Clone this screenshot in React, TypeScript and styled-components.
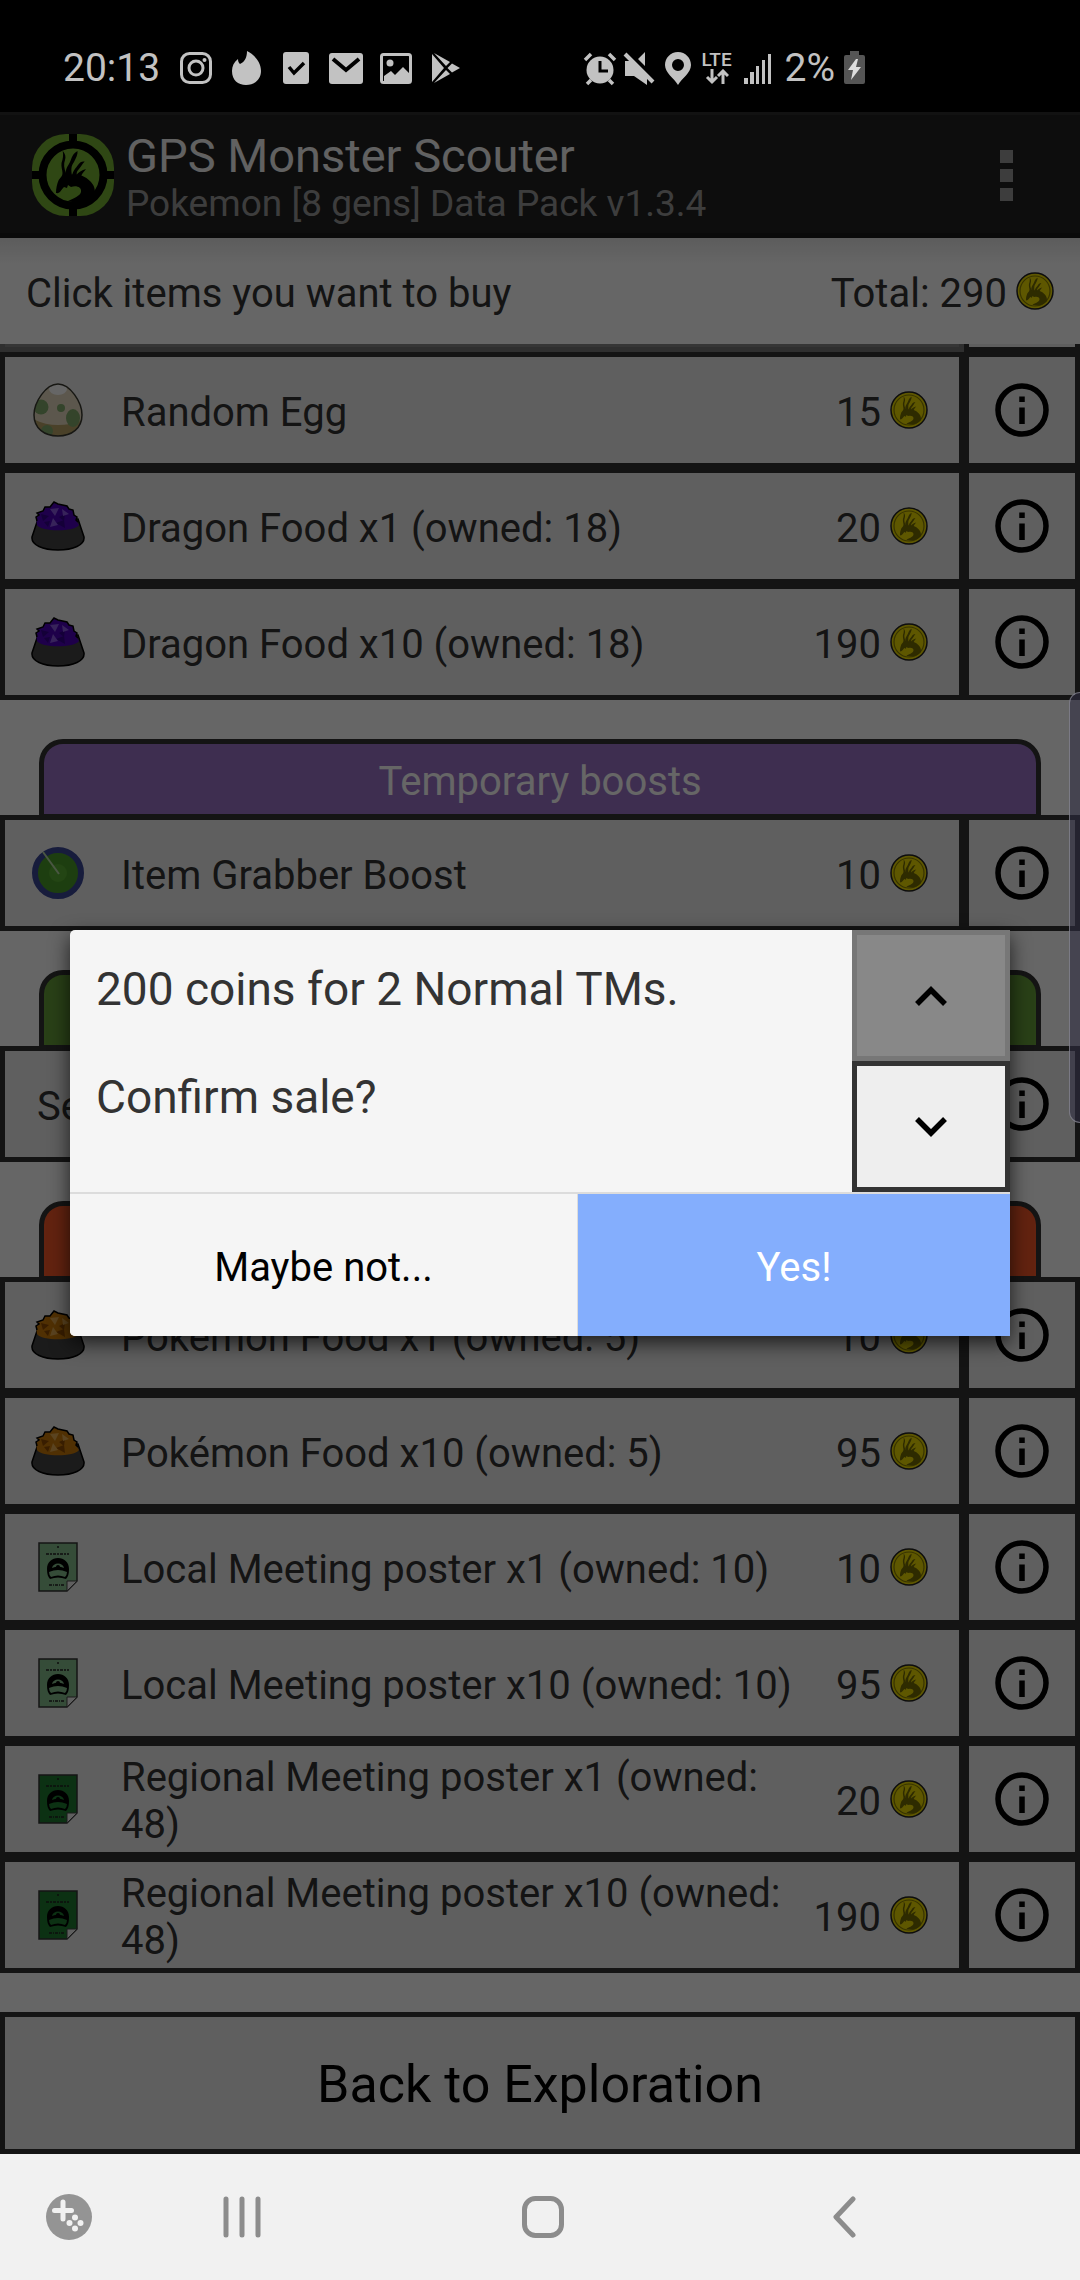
import React from 'react';
import styled, { createGlobalStyle } from 'styled-components';

const ink = '#333';
const cell = '#eee';

const GlobalStyle = createGlobalStyle`
  * { box-sizing: border-box; }
  body { margin: 0; background: #fff; font-family: Roboto, "Noto Sans", sans-serif; }
  button { font: inherit; color: inherit; margin: 0; padding: 0; border: 0; background: none; text-align: left; cursor: pointer; }
  svg { display: block; flex: none; }
`;

const Screen = styled.div`
  min-height: 100vh;
  display: flex;
  flex-direction: column;
`;

/* ---------- system bars ---------- */

const StatusBar = styled.div`
  height: 112px;
  padding: 0 215px 15px 63px;
  display: flex;
  align-items: flex-end;
  justify-content: space-between;
  background: #000;
  color: #c2c2c2;
  font-size: 39px;
  line-height: 58px;
`;

const StatusGroup = styled.div<{ $gap: number }>`
  display: flex;
  align-items: center;
  gap: ${p => p.$gap}px;
`;

const StatusText = styled.span`
  margin: 0 6px 0 8px;
`;

const Clock = styled.span`
  padding-right: 4px;
`;

const Network = styled.span`
  width: 36px;
  display: grid;
  justify-items: center;
  font-size: 19px;
  line-height: 18px;
  font-weight: 500;
`;

const NavBar = styled.nav`
  height: 126px;
  display: grid;
  grid-template-columns: 92px repeat(3, 1fr) 86px;
  align-items: center;
  justify-items: center;
  background: #f1f1f1;
  color: #8c8c8c;
`;

const NavButton = styled.button<{ $end?: boolean }>`
  justify-self: ${p => (p.$end ? 'end' : 'center')};
`;

/* ---------- app ---------- */

const AppArea = styled.div`
  position: relative;
  flex: 1;
  display: flex;
  flex-direction: column;
  color: ${ink};
  font-size: 40px;
  line-height: 47px;
`;

const Header = styled.header`
  height: 126px;
  padding: 2px 67px 0 32px;
  display: flex;
  align-items: center;
  gap: 12px;
  background: #222;
  border-top: 3px solid #2e2e2e;
  border-bottom: 5px solid #1a1a1a;
`;

const Titles = styled.div`
  flex: 1;
  padding-top: 6px;
`;

const Title = styled.h1`
  margin: 0;
  font-size: 47px;
  line-height: 52px;
  font-weight: 400;
  color: #f2f2f2;
`;

const Subtitle = styled.p`
  margin: 0;
  font-size: 37px;
  line-height: 44px;
  color: #9a9a9a;
`;

const MenuButton = styled.button`
  display: grid;
  gap: 6px;
`;

const MenuDot = styled.span`
  width: 13px;
  height: 13px;
  background: #999;
`;

const TotalBar = styled.div`
  height: 106px;
  padding: 0 26px;
  display: flex;
  align-items: center;
  justify-content: space-between;
  background: linear-gradient(#e6e6e6, #fff 26px);
`;

const Label = styled.span`
  padding-top: 4px;
`;

const Price = styled.span`
  display: flex;
  align-items: center;
  gap: 9px;
  white-space: nowrap;
`;

const Row = styled.div`
  display: grid;
  grid-template-columns: 1fr 116px;
`;

const ItemButton = styled.button<{ $plain?: boolean }>`
  min-height: 116px;
  padding: 0 31px 0 ${p => (p.$plain ? 32 : 26)}px;
  display: flex;
  align-items: center;
  border: 5px solid ${ink};
  background: ${cell};
`;

const ItemIcon = styled.span`
  width: 54px;
  margin-right: 36px;
  display: grid;
  place-items: center;
  flex: none;
`;

const ItemName = styled(Label)`
  flex: 1;
  padding-right: 16px;
`;

const InfoButton = styled.button`
  display: grid;
  place-items: center;
  border: 5px solid ${ink};
  background: ${cell};
  color: #000;
`;

const ScrolledItem = styled.div`
  height: 8px;
  background: #888;
  border: 5px solid #777;
  border-top: 0;
`;

const ScrolledInfo = styled.div`
  height: 8px;
  background: ${cell};
  border: 5px solid ${ink};
  border-top: 0;
`;

const Section = styled.section`
  padding-top: 39px;
`;

const Tab = styled.h2<{ $color: string }>`
  height: 76px;
  margin: 0 39px;
  padding-top: 14px;
  border: 5px solid ${ink};
  border-bottom-width: 1px;
  border-radius: 24px 24px 0 0;
  background: ${p => p.$color};
  color: #fff;
  font-size: 40px;
  line-height: 47px;
  font-weight: 400;
  text-align: center;
`;

const BackButton = styled.button`
  height: 142px;
  margin-top: 39px;
  padding-top: 4px;
  border: 5px solid ${ink};
  background: ${cell};
  color: #000;
  font-size: 52px;
  line-height: 62px;
  text-align: center;
`;

/* ---------- dialog ---------- */

const Scrim = styled.div`
  position: absolute;
  inset: 0;
  padding: 0 70px;
  display: flex;
  align-items: center;
  background: rgba(0, 0, 0, 0.6);
`;

const Dialog = styled.div`
  flex: 1;
  border-radius: 5px 0 0 5px;
  overflow: hidden;
  background: #f5f5f5;
`;

const DialogShadow = styled.div`
  flex: 1;
  display: flex;
  border-radius: 5px 0 0 5px;
  box-shadow: 0 7px 20px rgba(0, 0, 0, 0.7);
`;

const DialogBody = styled.div`
  display: grid;
  grid-template-columns: 1fr 158px;
  border-bottom: 2px solid #dcdcdc;
`;

const Message = styled.div`
  padding: 32px 26px;
  font-size: 46px;
  line-height: 54px;
`;

const Paragraph = styled.p`
  margin: 0 0 54px;
  &:last-child { margin: 0; }
`;

const ArrowButton = styled.button`
  width: 100%;
  height: 131px;
  display: grid;
  place-items: center;
  border: 5px solid ${ink};
  background: ${cell};
  color: #000;
  &:disabled { background: #888; border-color: #777; }
`;

const Actions = styled.div`
  display: grid;
  grid-template-columns: 507fr 433fr;
`;

const Action = styled.button<{ $primary?: boolean }>`
  height: 142px;
  padding-top: 4px;
  text-align: center;
  background: ${p => (p.$primary ? '#84aefd' : '#f5f5f5')};
  color: ${p => (p.$primary ? '#fff' : '#000')};
  border-left: ${p => (p.$primary ? '1px solid #dcdcdc' : '0')};
`;

const EdgeHandle = styled.div`
  position: absolute;
  top: 580px;
  right: 0;
  width: 11px;
  height: 431px;
  border: 1px solid rgba(160, 160, 170, 0.6);
  border-right: 0;
  border-radius: 11px 0 0 11px;
  background: rgba(47, 45, 65, 0.6);
`;

/* ---------- drawings ---------- */

const Dragon = () => (
  <g fill="currentColor">
    <path d="M24 59C24 54 25 50 26.700 46C29 43 30.500 42 30.500 39C30.500 36 29 33 29.500 29C31 25 31.500 21 30.700 16.700C33.500 20 34 23 33 26C31.500 30 32 34 34 39L37 41C44 39 52 41 58 47C62 51 63 54 63 60C56 68 46 70 36 67C42 64 48 62 49 58C50 53 44 51 39 53L36 51L35 54L32 53C29 56 28 60 24 59Z" />
    <path d="M34 41C33 35 36 32 38 28C40 24 40 20 45.500 17C46 20 44 24 42 28C39 32 39 35 40 42Z" />
    <path d="M40 42C41 36 44 34 46 31C48 28 50 27 52.700 27.500C50 30 49 33 47 35C45 37 44 39 45 42Z" />
    <path d="M44 42C46 38 50 36 54 35C52 38 50 39 49 43Z" />
  </g>
);

const Logo = () => (
  <svg width="82" height="82" viewBox="0 0 82 82" color="#000" aria-hidden="true">
    <rect width="82" height="82" rx="34" fill="#76b232" />
    <path d="M41 0V12M41 70V82M0 41H12M70 41H82" stroke="#000" strokeWidth="8" />
    <circle cx="41" cy="41" r="30.500" fill="none" stroke="#000" strokeWidth="8" />
    <Dragon />
  </svg>
);

const Coin = () => (
  <svg width="38" height="38" viewBox="0 0 38 38" color="#736b00" aria-hidden="true">
    <circle cx="19" cy="19" r="18" fill="#ebd900" stroke="#222" strokeWidth="1.500" />
    <circle cx="19" cy="19" r="15" fill="none" stroke="#8a8000" strokeWidth="1.200" />
    <g transform="translate(-3 -3.500) scale(.54)"><Dragon /></g>
  </svg>
);

const Info = () => (
  <svg width="54" height="54" viewBox="0 0 54 54" aria-hidden="true">
    <circle cx="27" cy="27" r="24" fill="none" stroke="currentColor" strokeWidth="5.500" />
    <path d="M27 13.500V19M27 24.500V41" stroke="currentColor" strokeWidth="5.500" />
  </svg>
);

const Egg = () => (
  <svg width="50" height="54" viewBox="0 0 50 54" aria-hidden="true">
    <clipPath id="shell"><path d="M25 1C37 1 49 19 49 32C49 45 39 53 25 53S1 45 1 32C1 19 13 1 25 1Z" /></clipPath>
    <g clipPath="url(#shell)">
      <path d="M0 0H50V54H0Z" fill="#e6dac0" />
      <ellipse cx="25" cy="6" rx="9" ry="6" fill="#fff" />
      <path d="M0 36Q12 42 25 42T50 37V54H0Z" fill="#b8a468" />
      <circle cx="8" cy="24" r="7.500" fill="#82aa6c" />
      <circle cx="28" cy="25" r="4" fill="#82aa6c" />
      <ellipse cx="40" cy="35" rx="7" ry="9" fill="#82aa6c" />
      <ellipse cx="14" cy="48" rx="6" ry="6" fill="#82aa6c" />
    </g>
    <path d="M25 1C37 1 49 19 49 32C49 45 39 53 25 53S1 45 1 32C1 19 13 1 25 1Z" fill="none" stroke="#3a3a30" strokeWidth="1.500" />
  </svg>
);

const Bowl = ({ food, shade, light }: { food: string; shade: string; light: string }) => (
  <svg width="54" height="50" viewBox="0 0 54 50" aria-hidden="true">
    <path d="M7 18L1 36C0 44 12 49 27 49S54 44 53 36L47 18Z" fill="#444" stroke="#000" strokeWidth="1.500" />
    <path d="M6 24L5 16L8 14L6 12L12 10L14 6L19 6L23 1L27 3L36 5L38 8L42 9L43 14L46 16L45 19L48 24C44 31 10 31 6 24Z" fill={food} />
    <path d="M6 20L5 16L8 14L6 12L12 10L14 6L19 6L23 1L27 3L36 5L38 8L42 9L43 14L46 16L45 19L47 21" fill="none" stroke="#000" strokeWidth="1.500" />
    <path d="M10 13L18 15L12 20ZM28 16L34 13L33 20ZM25 22L33 19L34 27ZM13 21L19 20L17 26Z" fill={shade} />
    <path d="M19 8L28 7L24 15ZM31 8L38 13L32 15ZM22 17L27 24L19 26Z" fill={light} />
  </svg>
);

const Radar = () => (
  <svg width="52" height="52" viewBox="0 0 52 52" aria-hidden="true">
    <circle cx="26" cy="26" r="23" fill="#4a9c28" stroke="#3a4696" strokeWidth="6" />
    <circle cx="26" cy="26" r="9" fill="#58ac32" />
    <path d="M27 27L11 5" stroke="#b8d8a8" strokeWidth="2" />
  </svg>
);

const Poster = ({ color }: { color: string }) => (
  <svg width="40" height="50" viewBox="0 0 40 50" aria-hidden="true">
    <path d="M1 1H39V39L29 49H1Z" fill={color} stroke="#333" strokeWidth="1.500" />
    <path d="M39 39H29V49Z" fill="#eee" stroke="#444" />
    <path d="M8 12H31" stroke="#222" strokeWidth="1.500" strokeDasharray="3 1 2 1" />
    <path d="M11 43H27" stroke="#222" strokeWidth="1.500" strokeDasharray="3 1 1 1" />
    <circle cx="20" cy="5" r="1" fill="#222" />
    <path d="M9 27C9 20 14 16 20 16S31 20 31 27C31 32 30 35 28 37Q20 34 12 37C10 35 9 32 9 27Z" fill="#000" />
    <path d="M14 26C15 20 25 20 26 26Q20 23 14 26Z" fill={color} />
    <circle cx="20" cy="25" r="2" fill="#000" />
    <path d="M11 30Q20 26 29 30Q29 33 27 35Q20 32 13 35Q11 33 11 30Z" fill={color} />
  </svg>
);

const statusSvg = { width: 36, height: 36, viewBox: '0 0 36 36', fill: 'currentColor', 'aria-hidden': true } as const;

const Chevron = ({ d }: { d: string }) => (
  <svg width="32" height="20" viewBox="0 0 32 20" fill="none" aria-hidden="true">
    <path d={d} stroke="currentColor" strokeWidth="5.500" />
  </svg>
);

/* ---------- parts ---------- */

const Amount = ({ children }: { children: React.ReactNode }) => (
  <Price><Label>{children}</Label><Coin /></Price>
);

interface Item { name: string; price?: number; icon?: React.ReactNode }

const ShopRow = ({ name, price, icon }: Item) => (
  <Row>
    <ItemButton $plain={!icon}>
      {icon && <ItemIcon>{icon}</ItemIcon>}
      <ItemName>{name}</ItemName>
      {price !== undefined && <Amount>{price}</Amount>}
    </ItemButton>
    <InfoButton aria-label={'About ' + name}><Info /></InfoButton>
  </Row>
);

const dragonFood = <Bowl food="#4b00b8" shade="#32008c" light="#8a58e0" />;
const pokemonFood = <Bowl food="#c87808" shade="#8c4a00" light="#e0a850" />;
const localPoster = <Poster color="#84be8c" />;
const regionalPoster = <Poster color="#1e7a30" />;

const firstItems: Item[] = [
  { name: 'Random Egg', price: 15, icon: <Egg /> },
  { name: 'Dragon Food x1 (owned: 18)', price: 20, icon: dragonFood },
  { name: 'Dragon Food x10 (owned: 18)', price: 190, icon: dragonFood },
];

const supplies: Item[] = [
  { name: 'Pokémon Food x1 (owned: 5)', price: 10, icon: pokemonFood },
  { name: 'Pokémon Food x10 (owned: 5)', price: 95, icon: pokemonFood },
  { name: 'Local Meeting poster x1 (owned: 10)', price: 10, icon: localPoster },
  { name: 'Local Meeting poster x10 (owned: 10)', price: 95, icon: localPoster },
  { name: 'Regional Meeting poster x1 (owned: 48)', price: 20, icon: regionalPoster },
  { name: 'Regional Meeting poster x10 (owned: 48)', price: 190, icon: regionalPoster },
];

const Status = () => (
  <StatusBar>
    <StatusGroup $gap={14}>
      <Clock>20:13</Clock>
      <svg {...statusSvg}>
        <rect x="3.500" y="3.500" width="29" height="29" rx="8" fill="none" stroke="currentColor" strokeWidth="3" />
        <circle cx="18" cy="18" r="7" fill="none" stroke="currentColor" strokeWidth="3" />
        <circle cx="26.500" cy="10" r="2" />
      </svg>
      <svg {...statusSvg}>
        <path d="M19 1C25 4 33 11 33 21C33 30 26 35 18 35S4 30 4 21C4 16 6 12 10 9C10 12 11 13 12 14C17 12 19 7 19 1Z" />
      </svg>
      <svg {...statusSvg}>
        <rect x="5" y="2" width="26" height="32" rx="3" />
        <path d="M11 17L16 23L26 13" fill="none" stroke="#000" strokeWidth="3.500" />
      </svg>
      <svg {...statusSvg}>
        <rect x="1" y="3" width="34" height="31" rx="3" />
        <path d="M5 9L18 20L31 9" fill="none" stroke="#000" strokeWidth="4" />
      </svg>
      <svg {...statusSvg}>
        <rect x="3.500" y="4.500" width="29" height="28" rx="2" fill="none" stroke="currentColor" strokeWidth="3" />
        <circle cx="12" cy="13" r="3.500" />
        <path d="M6 31V26L13 21L17 25L25 17L31 23V31Z" />
      </svg>
      <svg {...statusSvg}>
        <path d="M4 4V32L16 18ZM6 3L18 16L22 12ZM6 33L18 20L22 24ZM24 13.500L19.500 18L24 22.500L32 18Z" />
      </svg>
    </StatusGroup>
    <StatusGroup $gap={3}>
      <svg {...statusSvg}>
        <circle cx="18" cy="20" r="13.500" />
        <path d="M18 11V21H26" fill="none" stroke="#000" strokeWidth="3" />
        <path d="M3 10L9 4M33 10L27 4M5 34L9 30M31 34L27 30" stroke="currentColor" strokeWidth="3.500" />
      </svg>
      <svg {...statusSvg}>
        <path d="M4 11H10L26 27V35L13 26H4ZM17 9L24 2V16Z" />
        <path d="M5 3L32 30" stroke="#000" strokeWidth="3" />
        <path d="M4 4L32 32" stroke="currentColor" strokeWidth="4" />
      </svg>
      <svg {...statusSvg}>
        <path fillRule="evenodd" d="M18 2C10.500 2 5 8 5 15C5 23 14 28 18 35C22 28 31 23 31 15C31 8 25.500 2 18 2ZM18 9A6 6 0 1 1 18 21A6 6 0 1 1 18 9Z" />
      </svg>
      <Network>
        LTE
        <svg width="24" height="16" viewBox="0 0 24 16" aria-hidden="true">
          <path d="M7 0V13M2 8L7 13L12 8M18 15V3M13 7L18 2L23 7" fill="none" stroke="currentColor" strokeWidth="3" />
        </svg>
      </Network>
      <svg {...statusSvg}>
        <path d="M6 28h4v6h-4zM12 22h4v12h-4zM18 16h3v18h-3zM24 10h3v24h-3zM30 4h3v30h-3z" />
      </svg>
      <StatusText>2%</StatusText>
      <svg width="21" height="36" viewBox="0 0 21 36" aria-hidden="true">
        <path d="M6 1H15V5H19Q21 5 21 7V32Q21 34 19 34H2Q0 34 0 32V7Q0 5 2 5H6Z" fill="#555" />
        <path d="M12 9L4 20H9L7 30L17 17H12L14 9Z" fill="#ddd" />
      </svg>
    </StatusGroup>
  </StatusBar>
);

const ConfirmSale = () => (
  <Scrim>
    <DialogShadow>
      <Dialog role="dialog" aria-label="Confirm sale">
        <DialogBody>
          <Message>
            <Paragraph>200 coins for 2 Normal TMs.</Paragraph>
            <Paragraph>Confirm sale?</Paragraph>
          </Message>
          <div>
            <ArrowButton disabled aria-label="More"><Chevron d="M2 18L16 4L30 18" /></ArrowButton>
            <ArrowButton aria-label="Less"><Chevron d="M2 2L16 16L30 2" /></ArrowButton>
          </div>
        </DialogBody>
        <Actions>
          <Action>Maybe not...</Action>
          <Action $primary>Yes!</Action>
        </Actions>
      </Dialog>
    </DialogShadow>
  </Scrim>
);

export default function App() {
  return (
    <Screen>
      <GlobalStyle />
      <Status />
      <AppArea>
        <Header>
          <Logo />
          <Titles>
            <Title>GPS Monster Scouter</Title>
            <Subtitle>Pokemon [8 gens] Data Pack v1.3.4</Subtitle>
          </Titles>
          <MenuButton aria-label="Menu"><MenuDot /><MenuDot /><MenuDot /></MenuButton>
        </Header>
        <TotalBar>
          <Label>Click items you want to buy</Label>
          <Amount>Total: 290</Amount>
        </TotalBar>
        <main>
          <Row><ScrolledItem /><ScrolledInfo /></Row>
          {firstItems.map(item => <ShopRow key={item.name} {...item} />)}
          <Section>
            <Tab $color="#9b73c8">Temporary boosts</Tab>
            <ShopRow name="Item Grabber Boost" price={10} icon={<Radar />} />
          </Section>
          <Section>
            <Tab $color="#66a03a" />
            <ShopRow name="Se" />
          </Section>
          <Section>
            <Tab $color="#f85828" />
            {supplies.map(item => <ShopRow key={item.name} {...item} />)}
          </Section>
        </main>
        <BackButton>Back to Exploration</BackButton>
        <ConfirmSale />
        <EdgeHandle />
      </AppArea>
      <NavBar>
        <NavButton $end aria-label="Game tools">
          <svg width="46" height="46" viewBox="0 0 46 46" aria-hidden="true">
            <circle cx="23" cy="23" r="23" fill="#949494" />
            <path d="M17 8V25M8.500 16.500H25.500" stroke="#f1f1f1" strokeWidth="5" strokeLinecap="round" />
            <g fill="#f1f1f1"><circle cx="29" cy="23.500" r="3" /><circle cx="29" cy="34.500" r="3" /><circle cx="23.500" cy="29" r="3" /><circle cx="34.500" cy="29" r="3" /></g>
          </svg>
        </NavButton>
        <NavButton aria-label="Recent apps">
          <svg width="40" height="42" viewBox="0 0 40 42" aria-hidden="true">
            <path d="M4 3V39M20 3V39M36 3V39" stroke="currentColor" strokeWidth="5" strokeLinecap="round" />
          </svg>
        </NavButton>
        <NavButton aria-label="Home">
          <svg width="42" height="42" viewBox="0 0 42 42" fill="none" aria-hidden="true">
            <rect x="2.500" y="2.500" width="37" height="37" rx="11" stroke="currentColor" strokeWidth="5" />
          </svg>
        </NavButton>
        <NavButton aria-label="Back">
          <svg width="26" height="42" viewBox="0 0 26 42" fill="none" aria-hidden="true">
            <path d="M22 3L5 21L22 39" stroke="currentColor" strokeWidth="5" strokeLinecap="round" strokeLinejoin="round" />
          </svg>
        </NavButton>
      </NavBar>
    </Screen>
  );
}
